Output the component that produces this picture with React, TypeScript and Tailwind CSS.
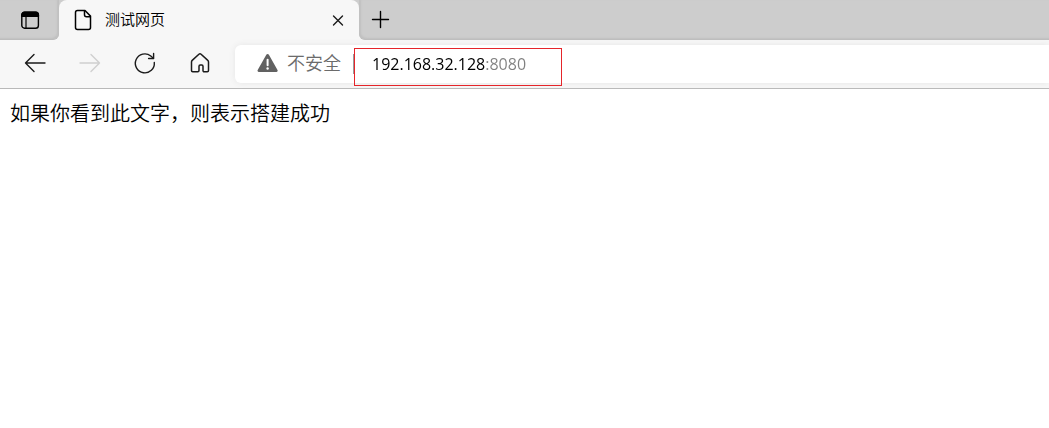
import React from 'react';

type IconButtonProps = {
  label: string;
  disabled?: boolean;
  children: React.ReactNode;
};

function ToolbarButton({ label, disabled, children }: IconButtonProps) {
  return (
    <button
      type="button"
      aria-label={label}
      disabled={disabled}
      className="flex h-9 w-10 shrink-0 items-center justify-center rounded text-[#1b1b1b] disabled:text-[#d0d0d0]"
    >
      {children}
    </button>
  );
}

function LineIcon({ children, width = 1.4 }: { children: React.ReactNode; width?: number }) {
  return (
    <svg
      width="24"
      height="24"
      viewBox="0 0 24 24"
      fill="none"
      stroke="currentColor"
      strokeWidth={width}
      strokeLinecap="round"
      strokeLinejoin="round"
      aria-hidden="true"
    >
      {children}
    </svg>
  );
}

function TabStrip() {
  return (
    <div className="flex h-10 bg-[#f7f7f7]">
      <div className="flex w-[59px] shrink-0 items-center justify-center rounded-br-md border-b border-[#bdbdbd] bg-[#cdcdcd] shadow-[inset_-2px_-1px_2px_#c0c0c0]">
        <button type="button" aria-label="标签页操作菜单" className="flex size-8 items-center justify-center text-black">
          <LineIcon>
            <rect x="3.8" y="4.2" width="16.6" height="16" rx="2.8" />
            <path d="M3.8 8.2V7a2.8 2.8 0 0 1 2.8-2.8h11a2.8 2.8 0 0 1 2.8 2.8v1.2z" fill="currentColor" />
            <path d="M8 8.5v11.5" strokeWidth="1.2" />
          </LineIcon>
        </button>
      </div>
      <div className="w-[300px] shrink-0 bg-[linear-gradient(#cdcdcd_50%,#f7f7f7_50%)]">
        <div className="flex h-full items-center rounded-t-lg bg-[#f7f7f7] pl-3 pr-[9px]">
          <LineIcon width={1.5}>
            <path d="M6.5 2.500h7.500l5.500 5.600v11.300a2 2 0 0 1-2 2h-11a2 2 0 0 1-2-2V4.500a2 2 0 0 1 2-2z" />
            <path d="M13.500 2.800v4a2 2 0 0 0 2 2h3.800" />
          </LineIcon>
          <span className="ml-[10px] grow pb-0.5 text-[15px] font-[350] leading-5 text-black">测试网页</span>
          <button type="button" aria-label="关闭标签页" className="flex size-6 items-center justify-center text-[#1b1b1b]">
            <LineIcon>
              <path d="M7.500 8l9 9M16.500 8l-9 9" />
            </LineIcon>
          </button>
        </div>
      </div>
      <div className="flex min-w-0 grow items-center rounded-bl-md border-b border-[#bdbdbd] bg-[#cdcdcd] pl-[10px] shadow-[inset_2px_-1px_2px_#c0c0c0]">
        <button type="button" aria-label="新建标签页" className="flex size-6 items-center justify-center text-black">
          <LineIcon>
            <path d="M11.500 3.500v16M3.500 11.500h16" />
          </LineIcon>
        </button>
      </div>
    </div>
  );
}

function AddressBar() {
  return (
    <form
      className="flex h-[38px] min-w-0 grow items-center rounded-l-md bg-white pl-[22px] shadow-[0_0_6px_#e6e6e6]"
      onSubmit={(event) => event.preventDefault()}
    >
      <svg width="22" height="20" viewBox="0 0 22 20" className="mb-0.5 shrink-0" aria-hidden="true">
        <path d="M9.300 1.700a1.500 1.500 0 0 1 2.600 0l8.600 15.200a1.300 1.300 0 0 1-1.200 2H1.900a1.300 1.300 0 0 1-1.200-2z" fill="#616161" />
        <path d="M10.600 6.800v5.500" stroke="#fff" strokeWidth="2" strokeLinecap="round" />
        <circle cx="10.600" cy="15.500" r="1.200" fill="#fff" />
      </svg>
      <label htmlFor="address" className="ml-2 shrink-0 pb-1 text-[18px] font-[350] leading-6 text-[#6b6b6b]">
        不安全
      </label>
      <span className="ml-3 h-5 w-px shrink-0 bg-[#9a9a9a]" />
      <div className="relative flex min-w-0 grow items-center">
        <input
          id="address"
          type="text"
          defaultValue="192.168.32.128:8080"
          className="ml-[18px] w-full bg-[linear-gradient(90deg,#000000_114px,#808080_114px)] bg-clip-text font-['Open_Sans',sans-serif] text-base leading-6 text-transparent caret-black outline-none"
        />
        <span className="pointer-events-none absolute -top-1 left-0 h-[38px] w-[208px] border border-[#e5252a]" />
      </div>
    </form>
  );
}

function Toolbar() {
  return (
    <div className="flex h-[49px] items-start gap-[15px] border-b border-[#b9b9b9] bg-[#f7f7f7] pl-[15px] pt-[5px]">
      <ToolbarButton label="返回">
        <LineIcon>
          <path d="M22 12H2.500M11 3.500L2.500 12l8.500 8.500" />
        </LineIcon>
      </ToolbarButton>
      <ToolbarButton label="前进" disabled>
        <LineIcon>
          <path d="M2 12h19.500M13 3.500l8.500 8.500-8.500 8.500" />
        </LineIcon>
      </ToolbarButton>
      <ToolbarButton label="刷新">
        <LineIcon>
          <path d="M21.300 11.500A9.500 9.500 0 1 1 17.800 5l2.600 2.200" />
          <path d="M20.600 2.500v5h-5" />
        </LineIcon>
      </ToolbarButton>
      <ToolbarButton label="主页">
        <LineIcon width={1.5}>
          <path d="M10.900 3.300a1.600 1.600 0 0 1 2.200 0l6.700 6.100c.5.400.7.900.7 1.500v8.700c0 .700-.6 1.200-1.200 1.200h-3.100c-.7 0-1.200-.5-1.200-1.200v-4.400c0-.7-.5-1.200-1.200-1.200h-1.600c-.7 0-1.200.5-1.200 1.200v4.400c0 .7-.5 1.200-1.200 1.200H4.700c-.7 0-1.200-.5-1.200-1.200v-8.700c0-.6.3-1.100.7-1.500z" />
        </LineIcon>
      </ToolbarButton>
      <AddressBar />
    </div>
  );
}

export default function App() {
  return (
    <div className="min-h-screen bg-white font-['Noto_Sans_CJK_SC',sans-serif]">
      <header>
        <TabStrip />
        <Toolbar />
      </header>
      <main className="px-[10px] pt-[10px]">
        <p className="text-xl font-[350] leading-7 text-black">如果你看到此文字，则表示搭建成功</p>
      </main>
    </div>
  );
}
